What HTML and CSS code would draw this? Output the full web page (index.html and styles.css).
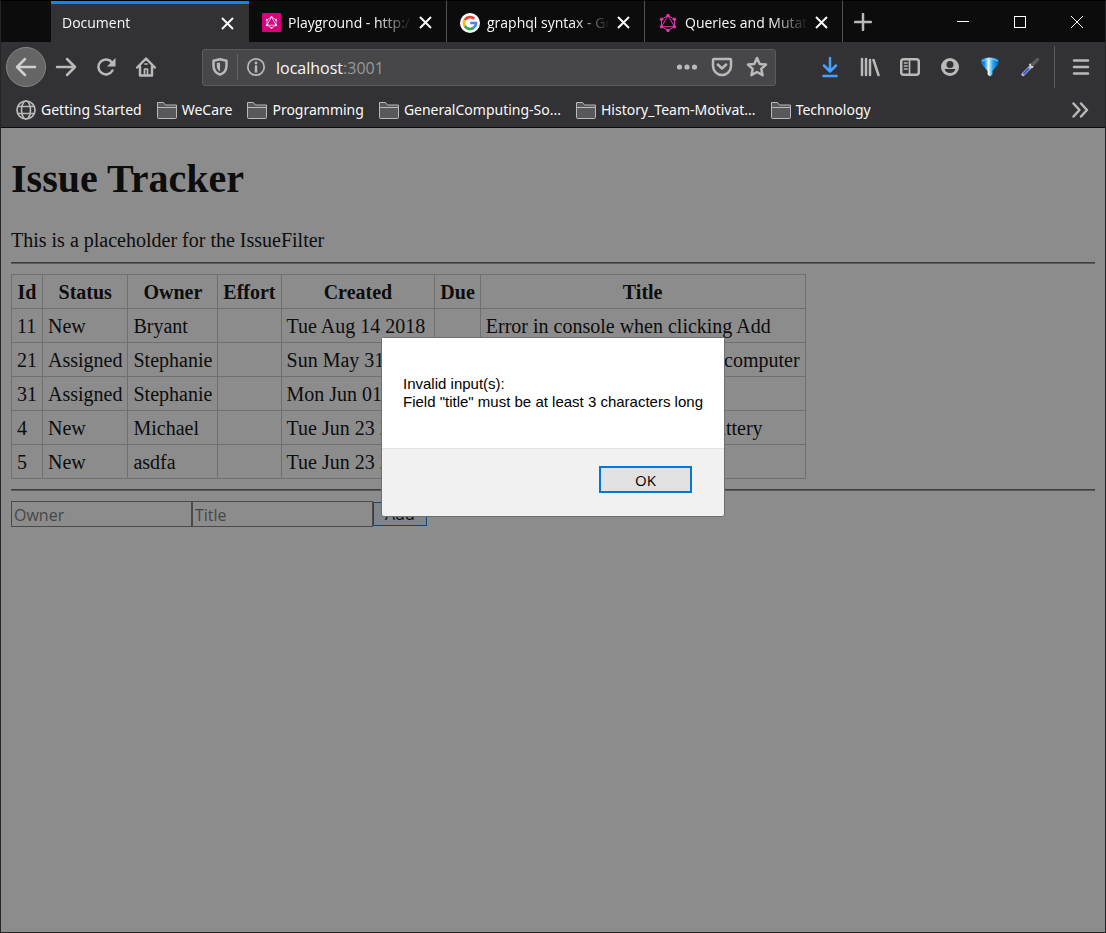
FILE: index.html
```html
<!DOCTYPE html>
<html lang="en">
<head>
<meta charset="utf-8">
<title>Document</title>
<link rel="stylesheet" href="styles.css">
</head>
<body>
<div class="browser">
  <header class="chrome">
    <div class="tabbar">
      <div class="tab active">
        <span class="tab-title">Document</span>
        <button class="close" aria-label="Close tab"><svg width="13" height="13" viewBox="0 0 13 13"><path d="M1 1l11 11M12 1L1 12" stroke="#f9f9fa" stroke-width="2" fill="none"/></svg></button>
      </div>
      <div class="tab">
        <svg class="favicon" width="19" height="19" viewBox="0 0 19 19"><rect width="19" height="19" rx="1" fill="#d6007d"/><path d="M9.500 4L14 6.800v5.400L9.500 15 5 12.200V6.800zM9.500 4L5 12.200h9z" fill="none" stroke="#fff" stroke-width=".7"/><g fill="#fff"><circle cx="9.500" cy="4" r="1"/><circle cx="14.200" cy="6.800" r="1"/><circle cx="14.200" cy="12.200" r="1"/><circle cx="9.500" cy="15" r="1"/><circle cx="4.800" cy="12.200" r="1"/><circle cx="4.800" cy="6.800" r="1"/></g></svg>
        <span class="tab-title">Playground - http://localhost</span>
        <button class="close" aria-label="Close tab"><svg width="13" height="13" viewBox="0 0 13 13"><path d="M1 1l11 11M12 1L1 12" stroke="#f9f9fa" stroke-width="2" fill="none"/></svg></button>
      </div>
      <div class="tab">
        <svg class="favicon" width="20" height="20" viewBox="0 0 20 20"><circle cx="10" cy="10" r="10" fill="#fff"/><g fill="none" stroke-width="2.700"><path d="M14.200 5.800A6 6 0 0 0 4.800 7" stroke="#ea4335"/><path d="M4.800 7a6 6 0 0 0 0 6" stroke="#fbbc05"/><path d="M4.800 13a6 6 0 0 0 9 1.600" stroke="#34a853"/><path d="M13.800 14.600A6 6 0 0 0 16 10h-5.800" stroke="#4285f4"/></g></svg>
        <span class="tab-title">graphql syntax - Google Search</span>
        <button class="close" aria-label="Close tab"><svg width="13" height="13" viewBox="0 0 13 13"><path d="M1 1l11 11M12 1L1 12" stroke="#f9f9fa" stroke-width="2" fill="none"/></svg></button>
      </div>
      <div class="tab">
        <svg class="favicon" width="20" height="20" viewBox="0 0 20 20"><path d="M10 2.500l6.500 3.800v7.400L10 17.500l-6.500-3.800V6.300zM10 2.500L3.500 13.700h13z" fill="none" stroke="#e535ab" stroke-width="1"/><g fill="#e535ab"><circle cx="10" cy="2.500" r="1.700"/><circle cx="16.500" cy="6.300" r="1.700"/><circle cx="16.500" cy="13.700" r="1.700"/><circle cx="10" cy="17.500" r="1.700"/><circle cx="3.500" cy="13.700" r="1.700"/><circle cx="3.500" cy="6.300" r="1.700"/></g></svg>
        <span class="tab-title">Queries and Mutations</span>
        <button class="close" aria-label="Close tab"><svg width="13" height="13" viewBox="0 0 13 13"><path d="M1 1l11 11M12 1L1 12" stroke="#f9f9fa" stroke-width="2" fill="none"/></svg></button>
      </div>
      <button class="new-tab" aria-label="New tab"><svg width="18" height="18" viewBox="0 0 18 18"><path d="M9 1v16M1 9h16" stroke="#b9b9ba" stroke-width="2.500" stroke-linecap="round"/></svg></button>
      <div class="window-controls">
        <button aria-label="Minimize"><svg width="14" height="14" viewBox="0 0 14 14"><path d="M1 6.500h12" stroke="#fff"/></svg></button>
        <button aria-label="Maximize"><svg width="14" height="14" viewBox="0 0 14 14"><rect x="1.500" y="1.500" width="11" height="11" stroke="#fff" fill="none"/></svg></button>
        <button aria-label="Close"><svg width="14" height="14" viewBox="0 0 14 14"><path d="M1 1l12 12M13 1L1 13" stroke="#fff"/></svg></button>
      </div>
    </div>

    <nav class="navbar">
      <button class="tool back" aria-label="Back"><svg width="22" height="20" viewBox="0 0 22 20"><path d="M20 10H2M10 2l-8 8 8 8" class="line"/></svg></button>
      <button class="tool" aria-label="Forward"><svg width="22" height="20" viewBox="0 0 22 20"><path d="M2 10h18M12 2l8 8-8 8" class="line"/></svg></button>
      <button class="tool" aria-label="Reload"><svg width="20" height="20" viewBox="0 0 20 20"><path d="M16 5.500A7.500 7.500 0 1 0 16.500 13.500" class="line"/><path d="M19.500 1v8.500H11z" fill="#b9b9ba"/></svg></button>
      <button class="tool" aria-label="Home"><svg width="20" height="20" viewBox="0 0 20 20"><path d="M1.200 10.500L10 1.500l8.800 9M4 9.500v9h12v-9" class="line"/><path d="M8.500 18v-6h3v6M9 7h2" class="line thin"/></svg></button>
      <div class="urlbar">
        <svg width="18" height="18" viewBox="0 0 18 18"><path d="M9 1.200l6.500 1.500v5c0 4.500-2.500 7.500-6.500 9-4-1.500-6.500-4.500-6.500-9v-5z" class="line"/><path d="M9 4.500v9C6.800 12 5.800 10 5.800 7.500v-2.400z" fill="#b9b9ba"/></svg>
        <span class="divider"></span>
        <svg width="20" height="20" viewBox="0 0 20 20"><circle cx="10" cy="10" r="8.200" class="line thin"/><path d="M10 9.500v5" class="line"/><circle cx="10" cy="6" r="1.400" fill="#b9b9ba"/></svg>
        <span class="address"><span class="host">localhost</span><span class="port">:3001</span></span>
        <button class="mini" aria-label="Page actions"><svg width="22" height="20" viewBox="0 0 22 20"><g fill="#b9b9ba"><circle cx="3.500" cy="10" r="2.600"/><circle cx="11" cy="10" r="2.600"/><circle cx="18.500" cy="10" r="2.600"/></g></svg></button>
        <button class="mini" aria-label="Save to Pocket"><svg width="22" height="20" viewBox="0 0 22 20"><path d="M3 2h16q1 0 1 1v6a9 9 0 0 1-18 0V3q0-1 1-1zM6.800 7.500L11 11.500l4.200-4" class="line"/></svg></button>
        <button class="mini" aria-label="Bookmark"><svg width="22" height="22" viewBox="0 0 22 22"><path d="M11 2l2.700 5.900 6.300.7-4.700 4.300 1.300 6.300-5.600-3.200-5.600 3.200 1.300-6.300L2 8.600l6.300-.7z" class="line"/></svg></button>
      </div>
      <button class="tool" aria-label="Downloads"><svg width="20" height="22" viewBox="0 0 20 22"><path d="M10 2v13M4 9.500l6 6 6-6M3.500 20h13" fill="none" stroke="#45a1ff" stroke-width="2.500" stroke-linecap="round" stroke-linejoin="round"/></svg></button>
      <button class="tool" aria-label="Library"><svg width="20" height="20" viewBox="0 0 20 20"><path d="M2 2v16M6 2v16M10 3v15M13.500 3l5 15" class="line"/></svg></button>
      <button class="tool" aria-label="Sidebars"><svg width="20" height="20" viewBox="0 0 20 20"><rect x="1.200" y="2.200" width="17.600" height="15.600" rx="2.500" class="line"/><path d="M9.500 3v14M4.500 6h2.500M4.500 9h2.500M4.500 12h2.500" class="line thin"/></svg></button>
      <button class="tool" aria-label="Account"><svg width="20" height="20" viewBox="0 0 20 20"><circle cx="10" cy="10" r="9" fill="#b9b9ba"/><circle cx="10" cy="7.500" r="3.500" fill="#323234"/><path d="M4.500 12h11A5.800 5.800 0 0 1 4.500 12z" fill="#323234"/></svg></button>
      <button class="tool" aria-label="Filter extension"><svg width="20" height="22" viewBox="0 0 20 22"><defs><linearGradient id="gem"><stop offset="0" stop-color="#0868c8"/><stop offset=".2" stop-color="#1690ee"/><stop offset=".42" stop-color="#e8f9ff"/><stop offset=".65" stop-color="#28a9f4"/><stop offset="1" stop-color="#0754a8"/></linearGradient></defs><path d="M1 5q0-2.500 4-3 5-.8 10 0 4 .5 4 3 0 3-3.500 6.500L12.500 15v3.500L10 20.500l-2.500-2V15l-3-3.500Q1 8 1 5z" fill="url(#gem)"/><path d="M2 5q8-4 16 0" fill="none" stroke="#9edcff" stroke-width=".8"/></svg></button>
      <button class="tool" aria-label="Color picker"><svg width="20" height="20" viewBox="0 0 20 20"><path d="M3 17.500L11 9.500" stroke="#aab4d8" stroke-width="3.200" stroke-linecap="round"/><path d="M3.500 17L9 11.500" stroke="#3e59d5" stroke-width="2"/><path d="M9.500 7l3.500 3.500" stroke="#e6e6e6" stroke-width="2"/><path d="M12.500 7.500l5-5" stroke="#5b5b5d" stroke-width="3.500" stroke-linecap="round"/></svg></button>
      <span class="menu-divider"></span>
      <button class="tool" aria-label="Menu"><svg width="18" height="18" viewBox="0 0 18 18"><path d="M2 2.500h14M2 9h14M2 15.500h14" class="line"/></svg></button>
    </nav>

    <div class="bookmarks">
      <a href="#" class="bookmark"><svg width="20" height="20" viewBox="0 0 20 20"><g class="line thin"><circle cx="10" cy="10" r="9"/><ellipse cx="10" cy="10" rx="4.500" ry="9"/><path d="M2 6.500h16M2 13.500h16"/></g></svg>Getting Started</a>
      <a href="#" class="bookmark"><svg width="20" height="18" viewBox="0 0 20 18"><path d="M.5 16.500v-15h6l2 2.500h11v12.500q0 1-1 1h-17q-1 0-1-1z" class="folder"/><path d="M1 6.500h18" class="fold"/></svg>WeCare</a>
      <a href="#" class="bookmark"><svg width="20" height="18" viewBox="0 0 20 18"><path d="M.5 16.500v-15h6l2 2.500h11v12.500q0 1-1 1h-17q-1 0-1-1z" class="folder"/><path d="M1 6.500h18" class="fold"/></svg>Programming</a>
      <a href="#" class="bookmark"><svg width="20" height="18" viewBox="0 0 20 18"><path d="M.5 16.500v-15h6l2 2.500h11v12.500q0 1-1 1h-17q-1 0-1-1z" class="folder"/><path d="M1 6.500h18" class="fold"/></svg>GeneralComputing-So...</a>
      <a href="#" class="bookmark"><svg width="20" height="18" viewBox="0 0 20 18"><path d="M.5 16.500v-15h6l2 2.500h11v12.500q0 1-1 1h-17q-1 0-1-1z" class="folder"/><path d="M1 6.500h18" class="fold"/></svg>History_Team-Motivat...</a>
      <a href="#" class="bookmark"><svg width="20" height="18" viewBox="0 0 20 18"><path d="M.5 16.500v-15h6l2 2.500h11v12.500q0 1-1 1h-17q-1 0-1-1z" class="folder"/><path d="M1 6.500h18" class="fold"/></svg>Technology</a>
      <button class="more" aria-label="More bookmarks"><svg width="18" height="18" viewBox="0 0 18 18"><path d="M2.500 2.500L8.500 9l-6 6.500M10 2.500L16 9l-6 6.500" class="line"/></svg></button>
    </div>
  </header>

  <div class="viewport">
    <main class="page">
      <h1>Issue Tracker</h1>
      <div>This is a placeholder for the IssueFilter</div>
      <hr>
      <table class="issues">
        <thead>
          <tr><th>Id</th><th>Status</th><th>Owner</th><th>Effort</th><th>Created</th><th>Due</th><th>Title</th></tr>
        </thead>
        <tbody>
          <tr><td>11</td><td>New</td><td>Bryant</td><td></td><td>Tue Aug 14 2018</td><td></td><td>Error in console when clicking Add</td></tr>
          <tr><td>21</td><td>Assigned</td><td>Stephanie</td><td></td><td>Sun May 31 2020</td><td></td><td>Cannot connect printer to the computer</td></tr>
          <tr><td>31</td><td>Assigned</td><td>Stephanie</td><td></td><td>Mon Jun 01 2020</td><td></td><td></td></tr>
          <tr><td>4</td><td>New</td><td>Michael</td><td></td><td>Tue Jun 23 2020</td><td></td><td>Laptop does not charge the battery</td></tr>
          <tr><td>5</td><td>New</td><td>asdfa</td><td></td><td>Tue Jun 23 2020</td><td></td><td></td></tr>
        </tbody>
      </table>
      <hr>
      <form class="add-form">
        <input type="text" placeholder="Owner" aria-label="Owner"><input type="text" placeholder="Title" aria-label="Title">
        <button type="button">Add</button>
      </form>
    </main>
    <div class="overlay">
      <div class="alert" role="alertdialog" aria-describedby="alert-message">
        <p class="message" id="alert-message">Invalid input(s):<br>Field "title" must be at least 3 characters long</p>
        <div class="actions"><button type="button" class="ok">OK</button></div>
      </div>
    </div>
  </div>
</div>
</body>
</html>
```
FILE: styles.css
```css
* { box-sizing: border-box; }

body {
  margin: 0;
  background: #0c0c0d;
}

.browser {
  display: flex;
  flex-direction: column;
  min-height: 100vh;
  border: 1px solid #252527;
  border-top-color: #000;
}

svg { display: block; flex: none; }

.line {
  fill: none;
  stroke: #b9b9ba;
  stroke-width: 2.5;
  stroke-linecap: round;
  stroke-linejoin: round;
}

.thin { stroke-width: 1.7; }

.chrome {
  background: #323234;
  border-bottom: 1px solid #0c0c0d;
  color: #f9f9fa;
  font: 14px/20px "Open Sans", "Noto Sans", sans-serif;
}

.chrome button {
  display: flex;
  align-items: center;
  justify-content: center;
  padding: 0;
  border: 0;
  background: none;
}

.tabbar {
  display: flex;
  height: 41px;
  padding-left: 50px;
  background: #0c0c0d;
}

.tab {
  display: flex;
  flex: 0 1 198px;
  align-items: center;
  gap: 7px;
  min-width: 0;
  padding: 2px 14px 0 13px;
  border-right: 1px solid #525254;
}

.tab.active {
  padding: 0 15px 0 11px;
  border-top: 3px solid #0a84ff;
  border-right: 0;
  background: #323234;
}

.tab-title {
  flex: 1;
  overflow: hidden;
  white-space: nowrap;
  mask-image: linear-gradient(to left, transparent, #000 36px);
}

.new-tab { width: 40px; }

.window-controls {
  display: flex;
  margin-left: auto;
}

.window-controls button { width: 57px; }

.navbar {
  display: flex;
  align-items: center;
  height: 50px;
  padding: 0 4px 0 5px;
}

.tool {
  width: 40px;
  height: 40px;
  flex: none;
}

.chrome .back {
  border: 1px solid #858586;
  border-radius: 50%;
  background: #656566;
}

.back .line { stroke: #d0d0d1; }

.urlbar {
  display: flex;
  flex: 1;
  align-items: center;
  gap: 8px;
  height: 37px;
  margin: 0 34px 0 36px;
  padding: 0 7px 0 8px;
  border: 1px solid #5c5c5e;
  border-radius: 3px;
  background: #474749;
}

.divider {
  width: 1px;
  height: 26px;
  background: #626267;
}

.address {
  flex: 1;
  padding: 2px 0 0 2px;
  font-size: 16px;
  line-height: 24px;
}

.port { color: #98989a; }

.mini + .mini { margin-left: 5px; }

.menu-divider {
  width: 1px;
  height: 42px;
  margin: 0 6px 0 4px;
  background: #5c5c5e;
}

.bookmarks {
  display: flex;
  align-items: center;
  gap: 15px;
  height: 35px;
  padding: 0 16px 0 15px;
  font-family: "Noto Sans", "Open Sans", sans-serif;
}

.bookmark {
  display: flex;
  align-items: center;
  gap: 5px;
  color: inherit;
  text-decoration: none;
  white-space: nowrap;
}

.folder { fill: #59595b; stroke: #b9b9ba; }
.fold { stroke: #b9b9ba; }

.more { margin-left: auto; }

.viewport {
  position: relative;
  flex: 1;
  background: #fff;
}

.page {
  padding: 27px 10px;
  color: #000;
  font: 20px/23px "Liberation Serif", "Times New Roman", serif;
}

h1 {
  margin: 0 0 27px;
  font-size: 40px;
  line-height: 47px;
}

hr {
  height: 2px;
  margin: 10px 0;
  border: 0;
  border-top: 1px solid #626262;
  background: #9a9a9a;
}

.issues { border-collapse: collapse; }

.issues th,
.issues td {
  height: 34px;
  padding: 6px 5px 4px;
  border: 1px solid #c6c6c6;
  white-space: nowrap;
}

.add-form {
  display: flex;
  align-items: center;
}

.add-form input {
  width: 181px;
  height: 26px;
  padding: 2px 2px 0;
  border: 1px solid #7a7a7a;
  border-radius: 0;
  background: #fff;
  font: 16px/22px "Open Sans", "Noto Sans", sans-serif;
}

.add-form input::placeholder { color: #757575; }

.add-form button {
  height: 24px;
  padding: 0 11px;
  border: 1px solid #0078d7;
  background: #e5f1fb;
  font: 16px/22px "Open Sans", "Noto Sans", sans-serif;
}

.overlay {
  position: absolute;
  inset: 0;
  display: flex;
  align-items: flex-start;
  justify-content: center;
  padding-top: 209px;
  background: rgba(26, 26, 26, .5);
}

.alert {
  border: 1px solid #6e6e6e;
  border-radius: 3px;
  background: #f1f1f1;
  color: #000;
  font: 15px/18px "Liberation Sans", Arial, sans-serif;
}

.message {
  margin: 0;
  padding: 37px 21px;
  border-bottom: 1px solid #e3e3e3;
  background: #fff;
}

.actions {
  display: flex;
  justify-content: flex-end;
  padding: 17px 32px 23px;
}

.ok {
  width: 93px;
  height: 27px;
  padding: 0;
  border: 2px solid #0078d7;
  background: #e1e1e1;
  font: 15px/18px "Open Sans", "Noto Sans", sans-serif;
}
```
